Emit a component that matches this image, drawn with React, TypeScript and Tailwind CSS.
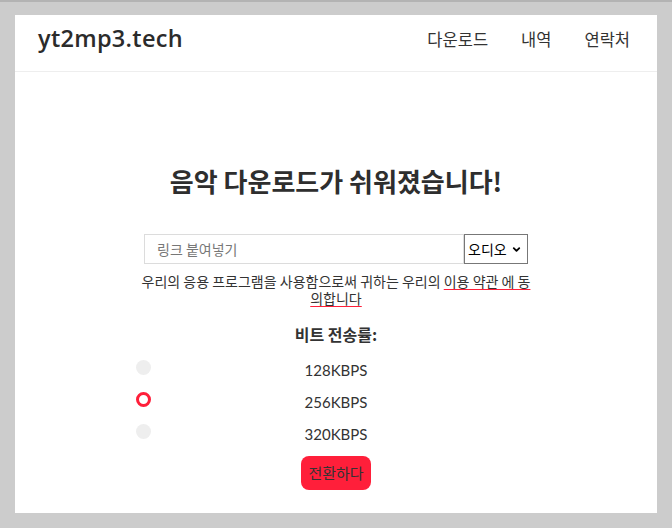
import { ChevronDown } from "lucide-react";

const rates = ["128KBPS", "256KBPS", "320KBPS"];

export default function App() {
  const kr = { fontFamily: '"Noto Sans CJK KR", "Noto Sans", sans-serif' };
  return (
    <div className="min-h-[528px] border-t-2 border-[#b3b3b3] bg-[#cccccc] px-[15px] pt-[13px] pb-[15px]" style={kr}>
      <div className="bg-white text-[#333]">
        <header className="flex h-[57px] items-center justify-between border-b border-[#eeeeee] pb-[8px] pl-[23px] pr-[27px]">
          <a className="text-[23.5px] font-semibold tracking-[0.3px] text-[#2b2b2b]" style={{ fontFamily: '"Open Sans", sans-serif' }}>
            yt2mp3.tech
          </a>
          <nav className="flex gap-[33px] text-[16.5px] text-[#333]">
            <a>다운로드</a>
            <a>내역</a>
            <a>연락처</a>
          </nav>
        </header>

        <main className="flex flex-col items-center pt-[89px] pb-[23px]">
          <h1 className="text-[26px] font-bold text-[#2e2e2e]">음악 다운로드가 쉬워졌습니다!</h1>

          <div className="mt-[34px] flex">
            <input
              placeholder="링크 붙여넣기"
              className="h-[30px] w-[320px] border border-[#dcdcdc] px-[12px] text-[14px] text-[#333] outline-none placeholder:text-[#777]"
            />
            <div className="flex h-[30px] w-[64px] items-center justify-between border border-[#777] pl-[3px] pr-[5px] text-[14px] text-black">
              <span>오디오</span>
              <ChevronDown className="size-[11px]" strokeWidth={4} />
            </div>
          </div>

          <p className="mt-[9px] w-[394px] text-center text-[14px] leading-[17px] text-[#333]">
            우리의 응용 프로그램을 사용함으로써 귀하는 우리의{" "}
            <a className="underline decoration-[#ff1f3a] underline-offset-2">이용 약관 에 동의합니다</a>
          </p>

          <h2 className="mt-[15px] text-[16px] font-bold text-[#333]">비트 전송률:</h2>

          <div className="mt-[8px] flex w-[400px] flex-col">
            {rates.map((r, i) => (
              <label key={r} className="flex h-[32px] items-center">
                <span
                  className={
                    i === 1
                      ? "mb-[6px] size-[15px] rounded-full border-[3.5px] border-[#ff1f3a] bg-white"
                      : "mb-[6px] size-[15px] rounded-full bg-[#eeeeee]"
                  }
                />
                <span className="flex-1 pr-[15px] text-center text-[15px] text-[#333]" style={{ fontFamily: '"Lato", sans-serif' }}>
                  {r}
                </span>
              </label>
            ))}
          </div>

          <button className="mt-[6px] h-[34px] w-[70px] rounded-lg bg-[#ff1f3a] text-[15px] text-[#333]">
            전환하다
          </button>
        </main>
      </div>
    </div>
  );
}
